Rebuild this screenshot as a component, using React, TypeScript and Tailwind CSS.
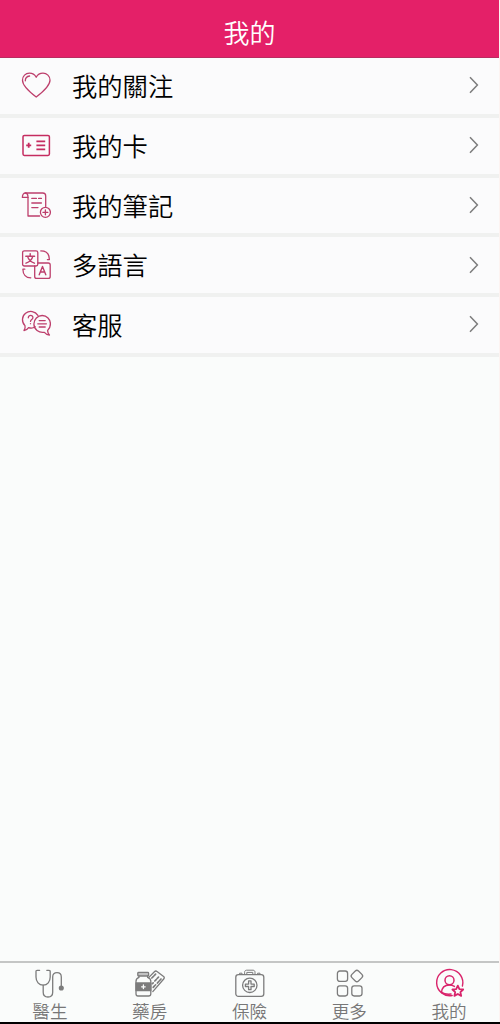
import { useState } from "react";
import type { ReactNode } from "react";
import clsx from "clsx";

interface MenuItem {
  id: string;
  label: string;
  icon: ReactNode;
}

function Icon({ children, className }: { children: ReactNode; className?: string }) {
  return (
    <svg
      viewBox="0 0 30 30"
      fill="none"
      stroke="currentColor"
      strokeWidth={1.3}
      strokeLinecap="round"
      strokeLinejoin="round"
      className={clsx("size-[30px] shrink-0", className)}
    >
      {children}
    </svg>
  );
}

const MENU: MenuItem[] = [
  {
    id: "follow",
    label: "我的關注",
    icon: (
      <Icon>
        <path d="M15.2 27C8 21.5 1.5 16 1.5 10.2C1.5 6 4.6 3.2 8.4 3.2C11.6 3.2 14 5 15.2 7.2C16.4 5 18.8 3.2 22 3.2C25.8 3.2 29 6 29 10.2C29 16 22.4 21.5 15.2 27Z" />
        <path d="M4.3 10.8C4.3 8.2 6 6.3 8.6 6" />
      </Icon>
    ),
  },
  {
    id: "card",
    label: "我的卡",
    icon: (
      <Icon className="text-[#c52c60]">
        <rect x="2" y="5.4" width="26.4" height="20" rx="1.4" strokeWidth={1.5} />
        <path d="M7.7 12.8V17.8M5.2 15.3H10.2M15.4 11.3H24.2M15.4 15.3H24.2M15.4 19.3H24.2" strokeWidth={1.8} strokeLinecap="butt" />
      </Icon>
    ),
  },
  {
    id: "notes",
    label: "我的筆記",
    icon: (
      <Icon>
        <path d="M4.2 3H21.8C23.6 3 24.7 4.2 24.7 6V16.4M7 7.4V26H18.6" />
        <path d="M7 7.4H1.4C1.4 4.8 2.4 3 4.2 3C6 3 7 4.8 7 7.4Z" />
        <path d="M10.8 8.4H15.4M17.6 8.4H20.4M10.8 13H20.4M10.8 17.6H17" />
        <circle cx="24.4" cy="22.3" r="5" />
        <path d="M24.4 19.8V24.8M21.9 22.3H26.9" />
      </Icon>
    ),
  },
  {
    id: "language",
    label: "多語言",
    icon: (
      <Icon>
        <rect x="1.6" y="0.8" width="15.2" height="15.2" rx="1.8" />
        <path d="M16.8 13H27.2C28.4 13 29.2 13.8 29.2 15V26.4C29.2 27.6 28.4 28.4 27.2 28.4H15.6C14.4 28.4 13.7 27.6 13.7 26.4V16" />
        <path d="M9.2 3.6V5.8M4.8 6.2H13.6M11.8 6.4C11 9.6 8.4 12 5 13.2M6.6 6.4C7.4 9.6 10 12 13.4 13.2" strokeWidth={1.4} />
        <path d="M18.2 24.8L21.5 16.4L24.8 24.8M19.3 22H23.7" strokeWidth={1.4} />
        <path d="M19.8 0.9C25 0.9 28.4 4 28.4 9.6H26.4M9.8 27.8C5 27.8 1.9 24.4 1.9 19.2H3.8" />
      </Icon>
    ),
  },
  {
    id: "service",
    label: "客服",
    icon: (
      <Icon>
        <path d="M14.2 17.8C12.4 19.1 9.7 19.4 7.6 18.6C6.6 20.2 4.9 21.2 3 21.5C4 20.2 4.4 18.4 4 16.6C0.4 13.2 0.7 7.2 4.6 4.2C8.6 1.2 14.2 2.2 16.9 6.4" />
        <path d="M26.6 21.6C26.7 23.3 27.3 24.8 28.4 26C26.4 25.8 24.6 24.8 23.4 23.3C17.8 24.3 12.9 20.4 12.9 15.1C12.9 10.2 16.7 6.5 21.2 6.5C25.8 6.5 29.4 10.2 29.4 14.8C29.4 17.6 28.4 20 26.6 21.6Z" />
        <path d="M7.3 8.8C7.3 5.6 12.1 5.8 11.9 8.7C11.8 10.6 9.5 10.5 9.5 12.4M9.5 14.6V14.7" />
        <path d="M18.2 11.6H24.2M16.8 14.8H25.4M18.2 18H24.2" />
      </Icon>
    ),
  },
];

const TABS: MenuItem[] = [
  {
    id: "doctor",
    label: "醫生",
    icon: (
      <Icon>
        <path d="M4.6 2.3H2.2C1.3 2.3 1 2.8 1 3.6V9C1 13.6 4 17.2 8.2 17.2C12.4 17.2 15.2 13.6 15.2 9V3.6C15.2 2.8 14.9 2.3 14 2.3H11.8" />
        <path d="M8.2 17.2V24.2C8.2 27.2 10.2 29 13 29C15.8 29 17.7 27.2 17.7 24.2V9C17.7 6.2 19.4 4.6 22 4.6C24.6 4.6 26.3 6.2 26.3 9V18" />
        <circle cx="26.3" cy="20" r="1.9" fill="currentColor" />
      </Icon>
    ),
  },
  {
    id: "pharmacy",
    label: "藥房",
    icon: (
      <Icon>
        <rect x="2.8" y="4.4" width="10.8" height="3.6" rx="0.8" fill="currentColor" fillOpacity={0.45} />
        <path d="M4 8V9.4C2 10.2 1 11.4 1 13.2V25.8C1 27.2 1.6 28 3 28H13.6C15 28 15.8 27.2 15.8 25.8V13.2C15.8 11.4 14.6 10.2 12.6 9.4V8" />
        <path d="M1 15H15.8V22.6H1Z" fill="currentColor" />
        <path d="M8.4 17V20.6M6.6 18.8H10.2" stroke="#fafcfb" />
        <path d="M13.6 9.6L19.4 3.8C20.2 3 21.2 2.8 22 3.6L28.6 8.6C29.4 9.3 29.4 10.2 28.7 11L17.8 23.6" />
        <path d="M16.8 10L20.6 6.2M19.8 13L23.8 8.8M22.4 15L26.4 10.6M17.4 15.6L18.2 14.8M18.2 19.4L20.6 16.8" strokeWidth={1.7} strokeDasharray="2 1.4" />
      </Icon>
    ),
  },
  {
    id: "insurance",
    label: "保險",
    icon: (
      <Icon>
        <rect x="0.8" y="6.6" width="28" height="21.8" rx="2.6" />
        <path d="M4.6 6.4V5.2H7V6.4M22.6 6.4V5.2H25V6.4M9.6 6.4V4.2C9.6 3 10.4 2.2 11.6 2.2H18C19.2 2.2 20 3 20 4.2V6.4M11.8 6.4V4.4H17.8V6.4" strokeWidth={1} />
        <circle cx="14.8" cy="17.3" r="7.2" />
        <path d="M13.6 12.9H16V16.1H19.2V18.5H16V21.7H13.6V18.5H10.4V16.1H13.6Z" />
      </Icon>
    ),
  },
  {
    id: "more",
    label: "更多",
    icon: (
      <Icon>
        <rect x="2.4" y="3" width="10.2" height="10.4" rx="2.4" />
        <rect x="2.4" y="17.8" width="10.2" height="10.2" rx="2.4" />
        <rect x="16.8" y="17.8" width="10.2" height="10.2" rx="2.4" />
        <path d="M20.3 3C21.2 2.1 22.6 2.1 23.5 3L26.9 6.4C27.8 7.3 27.8 8.7 26.9 9.6L23.5 13C22.6 13.9 21.2 13.9 20.3 13L16.9 9.6C16 8.7 16 7.3 16.9 6.4Z" />
      </Icon>
    ),
  },
  {
    id: "mine",
    label: "我的",
    icon: (
      <Icon>
        <path d="M17.2 27.5A13.1 13.1 0 1 1 27.4 18" strokeWidth={1.4} />
        <circle cx="14.5" cy="12.2" r="4.5" strokeWidth={1.5} />
        <path d="M6.6 24.4C6.8 19.8 9.8 16.9 14.4 16.9C16.4 16.9 18 17.4 19.4 18.4M6.6 24.4C8.8 25.8 12 26.4 16 26" strokeWidth={1.5} />
        <path d="M22.8 17.6L24.4 21.1L28.2 21.5L25.4 24.1L26.2 27.9L22.8 26L19.4 27.9L20.2 24.1L17.4 21.5L21.2 21.1Z" strokeWidth={1.8} />
      </Icon>
    ),
  },
];

function Chevron() {
  return (
    <svg viewBox="0 0 10 18" fill="none" stroke="#7d7d7d" strokeWidth={1.5} className="h-[18px] w-2.5">
      <path d="M1 1.2L8.4 9L1 16.8" />
    </svg>
  );
}

export default function App() {
  const [active, setActive] = useState("mine");

  return (
    <div className="flex h-[1024px] w-[500px] flex-col overflow-hidden bg-[#fafcfb] font-['Noto_Sans_CJK_TC',sans-serif]">
      <div className="flex min-h-0 flex-1 flex-col border-r border-[#fdf3f1]">
        <header className="flex h-[58px] shrink-0 items-center justify-center border-b border-[#b92c60] bg-[#e42068] pt-1.5">
          <h1 className="text-[26px] leading-none font-[350] text-white">我的</h1>
        </header>

        <main className="flex-1">
          {MENU.map((item) => (
            <button
              key={item.id}
              className="flex h-[59.75px] w-full items-center border-b-4 border-[#f0f1f0] bg-[#fbfbfc] pr-5 pb-px pl-[21px] text-left"
            >
              <span className="text-[#bd3f6c]">{item.icon}</span>
              <span className="mt-px ml-[21px] flex-1 text-[25.3px] leading-none font-[350] text-black">{item.label}</span>
              <Chevron />
            </button>
          ))}
        </main>

        <nav className="grid h-[61px] shrink-0 grid-cols-5 border-t-2 border-[#c4c6c5] bg-[#fafcfb]">
          {TABS.map((tab) => (
            <button key={tab.id} onClick={() => setActive(tab.id)} className="flex flex-col items-center pt-[5px]">
              <span className={clsx("pl-px", active === tab.id ? "text-[#d9246b]" : "text-[#7c7c7c]")}>{tab.icon}</span>
              <span className="mt-1 text-[17.6px] leading-none font-[350] text-[#777]">{tab.label}</span>
            </button>
          ))}
        </nav>
      </div>
      <div className="h-0.5 shrink-0 bg-black" />
    </div>
  );
}
